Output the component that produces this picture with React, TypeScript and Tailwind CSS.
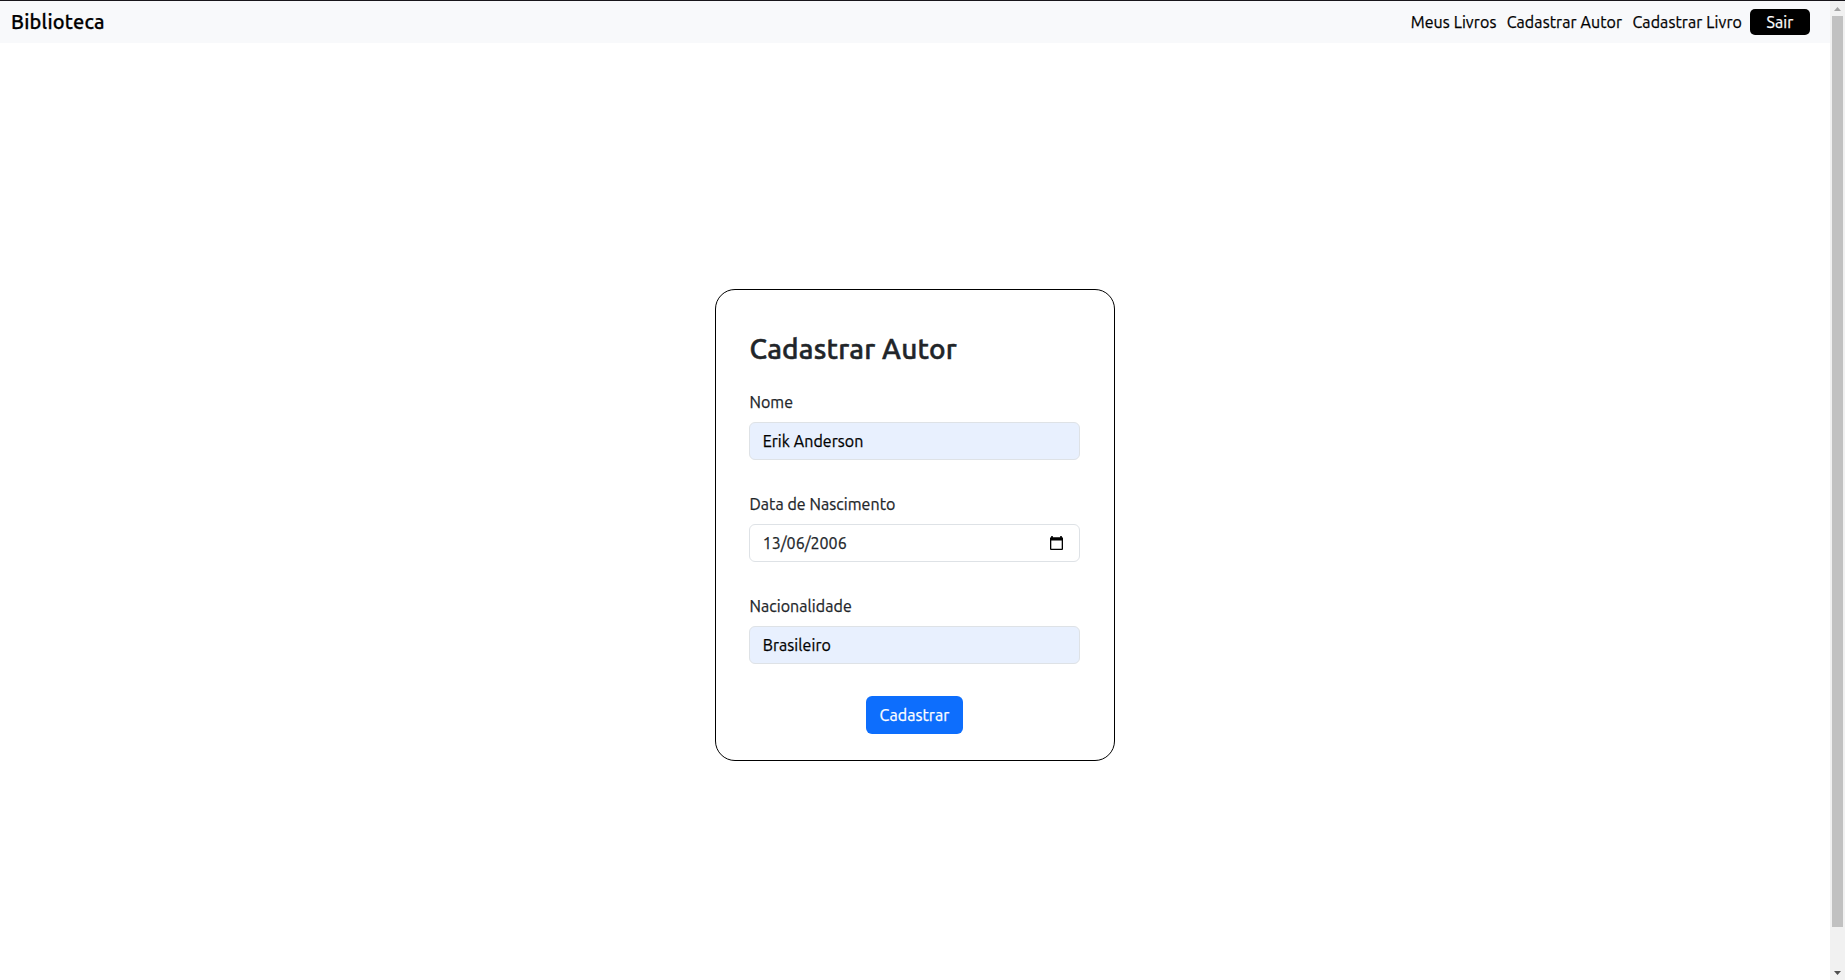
import type { ReactNode } from 'react';

function Field({ id, label, children }: { id: string; label: string; children: ReactNode }) {
  return (
    <div className="mb-8 flex flex-col gap-2">
      <label htmlFor={id} className="pl-[0.4px] leading-6">{label}</label>
      {children}
    </div>
  );
}

function CalendarIcon() {
  return (
    <svg viewBox="0 0 13 14" className="mr-[3px] -mt-px h-[14px] w-[13px]" aria-hidden="true">
      <path fill="#000" fillRule="evenodd" d="M1.2 0h1.6v1.3h7.4V0h1.6v1.3H12a1 1 0 0 1 1 1V13a1 1 0 0 1-1 1H1a1 1 0 0 1-1-1V2.3a1 1 0 0 1 1-1h.2zM1.3 4.6v8.1h10.4V4.6z" />
    </svg>
  );
}

function Navbar() {
  return (
    <nav className="flex h-[42px] items-center justify-between bg-[#f8f9fb] pr-5 pl-[11px] text-black">
      <a href="#" className="text-xl leading-[30px] font-medium tracking-[0.22px]">Biblioteca</a>
      <div className="flex items-center">
        <div className="mr-2 flex gap-[10.2px] tracking-[0.1px]">
          <a href="#">Meus Livros</a>
          <a href="#">Cadastrar Autor</a>
          <a href="#">Cadastrar Livro</a>
        </div>
        <button className="flex h-[26px] w-[60px] items-center justify-center rounded-[5px] bg-black text-white">Sair</button>
      </div>
    </nav>
  );
}

function Scrollbar() {
  return (
    <div className="flex w-[15px] flex-col items-center bg-[#f1f1f1]" aria-hidden="true">
      <div className="flex h-[15px] items-center justify-center">
        <svg viewBox="0 0 7 4" className="mt-px h-1 w-[7px]"><path fill="#a3a3a3" d="M3.5 0 7 4H0z" /></svg>
      </div>
      <div className="h-[911px] w-[11px] bg-[#c1c1c1]" />
      <div className="flex flex-1 items-end pb-[5px]">
        <svg viewBox="0 0 7 4" className="h-1 w-[7px]"><path fill="#505050" d="M0 0h7L3.5 4z" /></svg>
      </div>
    </div>
  );
}

const inputClass =
  'h-[38px] w-full rounded-md border border-[#dee2e6] pr-[13px] pl-[12.7px] leading-6 outline-none';

export default function App() {
  return (
    <div className="flex h-[980px] w-[1845px] flex-col overflow-hidden border-t border-[#18161b] bg-white font-['Ubuntu','Noto_Sans',sans-serif] text-base tracking-[0.07px] text-[#212529] [-webkit-text-stroke:0.25px_currentColor]">
      <div className="flex flex-1">
        <div className="flex flex-1 flex-col">
          <Navbar />
          <main className="flex justify-center pt-[246px]">
            <form className="flex h-[472px] w-[400px] flex-col rounded-[20px] border border-black pt-[42px] pr-[34px] pl-[33px]">
              <h1 className="mb-6 pl-[0.4px] text-[28px] leading-[34px] font-medium tracking-[0.18px] [-webkit-text-stroke:0.5px_currentColor]">Cadastrar Autor</h1>
              <Field id="nome" label="Nome">
                <input id="nome" readOnly value="Erik Anderson" className={`${inputClass} bg-[#e8f0fe] text-black`} />
              </Field>
              <Field id="data" label="Data de Nascimento">
                <div id="data" className={`${inputClass} flex items-center justify-between bg-white`}>
                  <span className="tracking-normal">13/06/2006</span>
                  <CalendarIcon />
                </div>
              </Field>
              <Field id="nacionalidade" label="Nacionalidade">
                <input id="nacionalidade" readOnly value="Brasileiro" className={`${inputClass} bg-[#e8f0fe] text-black`} />
              </Field>
              <button type="button" className="h-[38px] w-[97px] self-center rounded-md bg-[#0d6efd] text-white">Cadastrar</button>
            </form>
          </main>
        </div>
        <Scrollbar />
      </div>
    </div>
  );
}
